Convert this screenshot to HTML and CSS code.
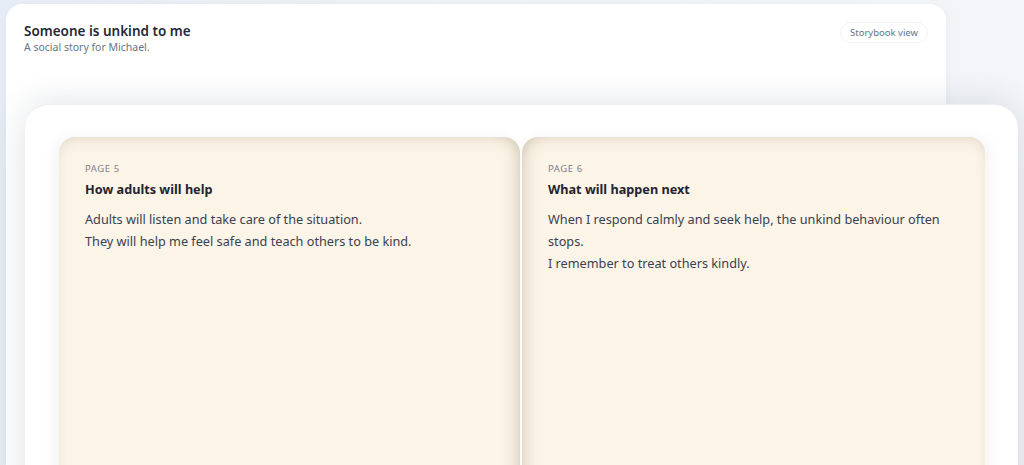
FILE: index.html
```html
<!DOCTYPE html>
<html lang="en">
<head>
<meta charset="utf-8">
<title>Someone is unkind to me</title>
<link rel="stylesheet" href="styles.css">
</head>
<body>
<div class="page">
  <section class="story-card">
    <header class="story-head">
      <div class="titles">
        <h1 class="story-title">Someone is unkind to me</h1>
        <p class="story-sub">A social story for Michael.</p>
      </div>
      <span class="view-pill">Storybook view</span>
    </header>
    <div class="book">
      <article class="leaf leaf-left">
        <div class="leaf-label">PAGE 5</div>
        <h2 class="leaf-title">How adults will help</h2>
        <p class="leaf-text">Adults will listen and take care of the situation.</p>
        <p class="leaf-text">They will help me feel safe and teach others to be kind.</p>
      </article>
      <article class="leaf leaf-right">
        <div class="leaf-label">PAGE 6</div>
        <h2 class="leaf-title">What will happen next</h2>
        <p class="leaf-text">When I respond calmly and seek help, the unkind behaviour often stops.</p>
        <p class="leaf-text">I remember to treat others kindly.</p>
      </article>
    </div>
  </section>
</div>
</body>
</html>
```
FILE: styles.css
```css
* { box-sizing: border-box; }
html, body {
  margin: 0;
  height: 100%;
  overflow: hidden;
}
body {
  font-family: "Noto Sans", "Open Sans", sans-serif;
  background: linear-gradient(90deg, #e7edf6 0%, #eef1f6 40%, #f4f5f8 100%);
  color: #1f2937;
}
.page {
  padding: 4px 0 0 6px;
}
.story-card {
  width: 940px;
  min-height: 600px;
  background: #ffffff;
  border-radius: 16px;
  padding: 18px 18px 0 18px;
  box-shadow: 0 2px 10px rgba(148, 163, 184, 0.12);
}
.story-head {
  display: flex;
  justify-content: space-between;
  align-items: flex-start;
}
.story-title {
  margin: 0;
  font-size: 13.5px;
  font-weight: 600;
  line-height: 18px;
  color: #1f2937;
}
.story-sub {
  margin: 0;
  font-size: 10.5px;
  line-height: 14px;
  color: #64748b;
}
.view-pill {
  margin-top: 0;
  padding: 2px 9px;
  font-size: 9.5px;
  line-height: 15px;
  color: #64748b;
  border: 1px solid #f1f3f6;
  border-radius: 999px;
}
.book {
  margin-top: 50px;
  margin-left: 1px;
  width: 993px;
  background: #ffffff;
  border-radius: 24px;
  border-top: 1px solid #eceef2;
  padding: 32px 33px 0 34px;
  display: grid;
  grid-template-columns: 461px 463px;
  column-gap: 2px;
  min-height: 500px;
  box-shadow: 0 -6px 30px rgba(100, 116, 139, 0.10), 0 10px 40px rgba(100, 116, 139, 0.12);
}
.leaf {
  background: #fbf4e7;
  border-radius: 16px 16px 0 0;
  padding: 25px 26px 0 26px;
  min-height: 440px;
}
.leaf-left {
  box-shadow:
    inset -14px 0 16px -12px rgba(120, 100, 70, 0.28),
    inset 0 12px 16px -12px rgba(120, 100, 70, 0.20),
    inset 8px 0 12px -10px rgba(120, 100, 70, 0.10),
    -4px 0 14px rgba(0, 0, 0, 0.05);
}
.leaf-right {
  box-shadow:
    inset 14px 0 16px -12px rgba(120, 100, 70, 0.28),
    inset 0 12px 16px -12px rgba(120, 100, 70, 0.20),
    inset -8px 0 12px -10px rgba(120, 100, 70, 0.10),
    4px 0 14px rgba(0, 0, 0, 0.05);
}
.leaf-label {
  font-size: 9.5px;
  letter-spacing: 0.6px;
  line-height: 14px;
  color: #7b8190;
}
.leaf-title {
  margin: 4px 0 10px 0;
  font-size: 12.7px;
  font-weight: 700;
  line-height: 18px;
  color: #1f2430;
}
.leaf-text {
  margin: 0;
  font-size: 12.7px;
  line-height: 22px;
  color: #3a4150;
}
```
